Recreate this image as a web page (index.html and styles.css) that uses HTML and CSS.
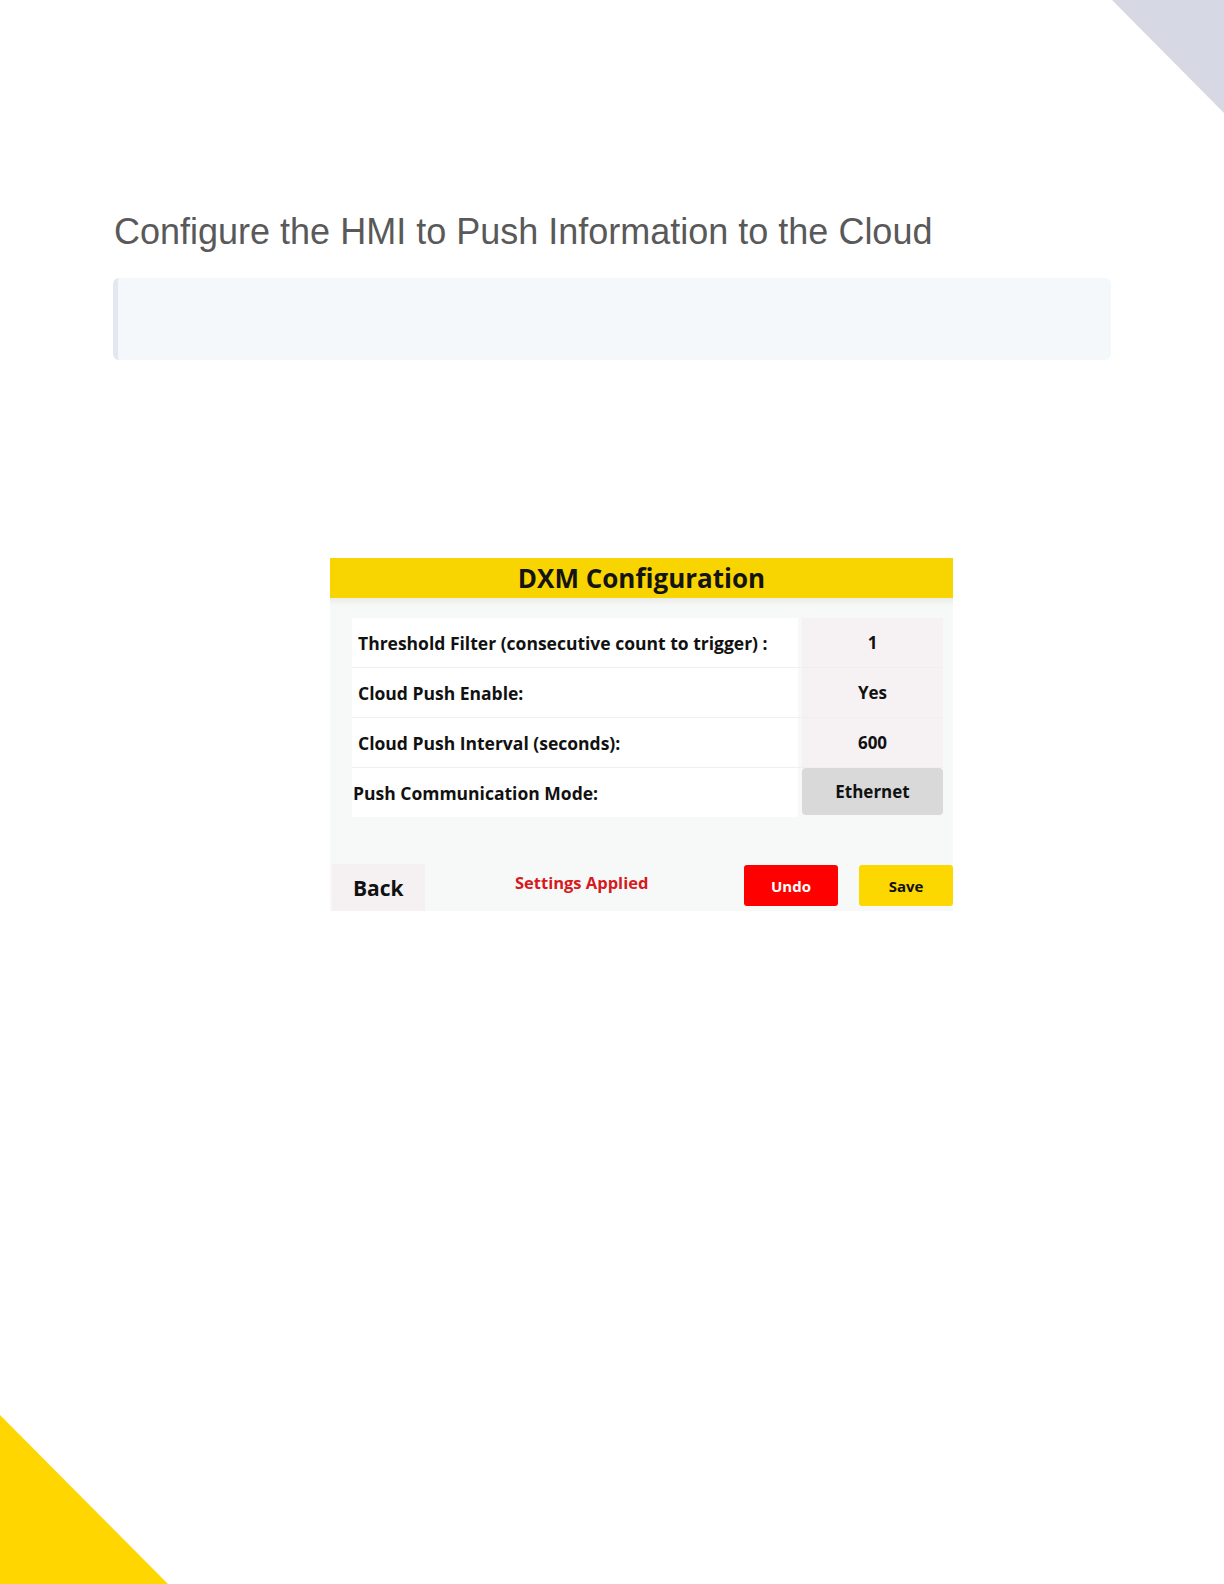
FILE: index.html
```html
<!DOCTYPE html>
<html lang="en">
<head>
  <meta charset="UTF-8">
  <meta name="viewport" content="width=device-width, initial-scale=1.0">
  <title>Configure the HMI to Push Information to the Cloud</title>
  <link rel="stylesheet" href="styles.css">
</head>
<body>
  <div class="corner corner-top"></div>
  <div class="corner corner-bottom"></div>

  <div class="page">
    <h1 class="title">Configure the HMI to Push Information to the Cloud</h1>
    <div class="note"></div>

    <!-- HMI screen -->
    <div class="hmi">
      <div class="hmi-header">DXM Configuration</div>
      <div class="hmi-body">
        <div class="rows">
          <div class="row">
            <div class="label">Threshold Filter (consecutive count to trigger) :</div>
            <div class="value">1</div>
          </div>
          <div class="row">
            <div class="label">Cloud Push Enable:</div>
            <div class="value">Yes</div>
          </div>
          <div class="row">
            <div class="label">Cloud Push Interval (seconds):</div>
            <div class="value">600</div>
          </div>
          <div class="row">
            <div class="label label-tight">Push Communication Mode:</div>
            <div class="value value-select">Ethernet</div>
          </div>
        </div>
        <div class="hmi-footer">
          <button class="btn-back">Back</button>
          <span class="status">Settings Applied</span>
          <button class="btn btn-undo">Undo</button>
          <button class="btn btn-save">Save</button>
        </div>
      </div>
    </div>
  </div>
</body>
</html>
```

FILE: styles.css
```css
html, body {
  margin: 0;
  padding: 0;
}

body {
  position: relative;
  height: 1584px;
  overflow: hidden;
  background: #ffffff;
  font-family: "Liberation Sans", Arial, sans-serif;
}

.corner {
  position: absolute;
}

.corner-top {
  top: 0;
  right: 0;
  width: 112px;
  height: 113px;
  background: #d6d9e3;
  clip-path: polygon(0 0, 100% 0, 100% 100%);
}

.corner-bottom {
  left: 0;
  bottom: 0;
  width: 168px;
  height: 169px;
  background: #ffd600;
  clip-path: polygon(0 0, 100% 100%, 0 100%);
}

.page {
  padding: 212px 0 0 113px;
}

.title {
  margin: 0 0 0 1px;
  font-size: 36px;
  line-height: 40px;
  font-weight: normal;
  color: #595959;
}

.note {
  width: 993px;
  height: 82px;
  margin-top: 26px;
  background: #f5f8fa;
  border-left: 5px solid #e3e8f0;
  border-radius: 6px;
}

/* HMI screen */
.hmi {
  width: 623px;
  margin: 198px 0 0 217px;
  font-family: "Open Sans", Lato, sans-serif;
  font-weight: 700;
  color: #111;
}

.hmi-header {
  height: 40px;
  line-height: 40px;
  background: #f8d500;
  text-align: center;
  font-size: 26px;
  color: #141414;
}

.hmi-body {
  background: linear-gradient(#e9ece7, #f6f9f8 8px);
  padding: 20px 10px 0 22px;
}

.rows {
  display: flex;
  flex-direction: column;
}

.row {
  display: flex;
  height: 49px;
  gap: 4px;
}

.row + .row {
  border-top: 1px solid #eef0ee;
}

.label {
  flex: 1;
  display: flex;
  align-items: center;
  padding-left: 6px;
  background: #ffffff;
  font-size: 17.5px;
}

.label-tight {
  padding-left: 1px;
}

.value {
  width: 141px;
  display: flex;
  align-items: center;
  justify-content: center;
  background: #f6f2f4;
  font-size: 17px;
}

.value-select {
  height: 47px;
  background: #d9d9d9;
  border-radius: 4px;
}

.hmi-footer {
  display: flex;
  align-items: center;
  height: 47px;
  margin: 47px -10px 0 -20px;
}

.hmi-footer button {
  font-family: inherit;
  font-weight: 700;
  border: none;
  cursor: pointer;
}

.btn-back {
  width: 93px;
  height: 47px;
  padding: 0 0 0 21px;
  text-align: left;
  background: #f5f1f3;
  font-size: 21px;
  color: #111;
}

.status {
  margin-left: 90px;
  margin-top: -11px;
  font-size: 16.5px;
  color: #d71920;
}

.btn {
  width: 94px;
  height: 41px;
  margin-top: -4px;
  border-radius: 3px;
  font-size: 15px;
}

.btn-undo {
  margin-left: auto;
  background: #ff0000;
  color: #ffffff;
}

.btn-save {
  margin-left: 21px;
  background: #fdd700;
  color: #111;
}
```
